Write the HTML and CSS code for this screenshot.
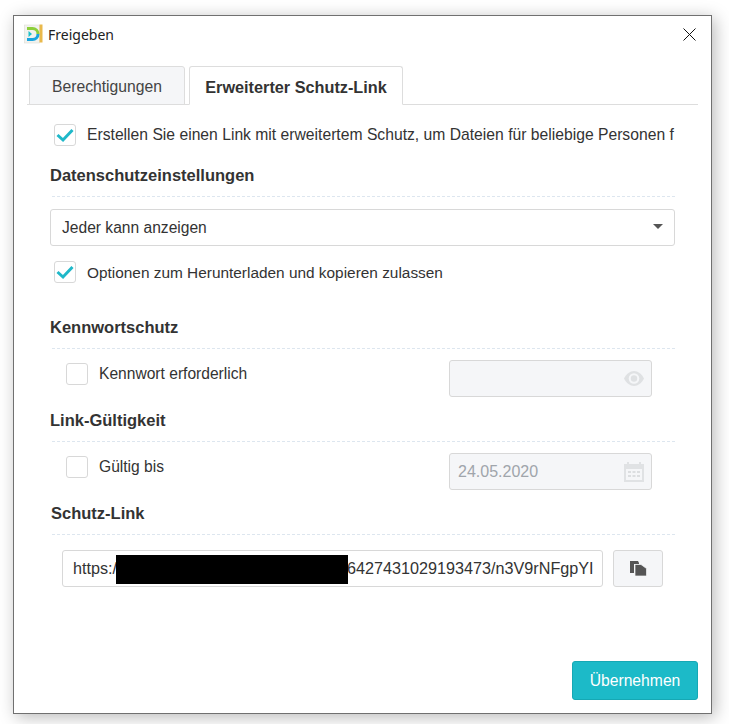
FILE: index.html
```html
<!DOCTYPE html>
<html lang="de">
<head>
    <meta charset="UTF-8">
    <title>Freigeben</title>
    <link rel="stylesheet" href="styles.css">
</head>
<body>
<div class="window">
    <div class="titlebar">
        <svg class="logo" width="20" height="20" viewBox="0 0 20 20">
            <rect x="0.500" y="1" width="15" height="18" fill="#f2f2ee" stroke="#dcdcd6" stroke-width="0.600"/>
            <rect x="15.500" y="0.500" width="3" height="18" fill="#e9b94c"/>
            <path d="M3 4.500h5.500a5.500 5.500 0 0 1 5.500 5.500" fill="none" stroke="#8ccf3a" stroke-width="3"/>
            <path d="M14 10a5.500 5.500 0 0 1-5.500 5.500H3" fill="none" stroke="#1aa5e0" stroke-width="3"/>
            <path d="M4.500 7l3.500 3-3.500 3z" fill="#1cc0c8"/>
        </svg>
        <span class="title">Freigeben</span>
        <svg class="close" width="13" height="13" viewBox="0 0 13 13">
            <path d="M0.500 0.500l12 12M12.500 0.500l-12 12" stroke="#111" stroke-width="1" fill="none"/>
        </svg>
    </div>

    <ul class="tabs">
        <li>Berechtigungen</li>
        <li class="selected">Erweiterter Schutz-Link</li>
    </ul>

    <div class="content">
        <label class="check-row first">
            <span class="checkbox"><svg width="20" height="20" viewBox="0 0 20 20"><path d="M2.500 10l5.500 5 9.500-10" fill="none" stroke="#1fb8c9" stroke-width="3"/></svg></span>
            <span class="check-text">Erstellen Sie einen Link mit erweitertem Schutz, um Dateien für beliebige Personen f</span>
        </label>

        <h3 class="heading top">Datenschutzeinstellungen</h3>
        <hr class="divider">
        <div class="select">
            <span>Jeder kann anzeigen</span>
            <i class="arrow"></i>
        </div>
        <label class="check-row second">
            <span class="checkbox"><svg width="20" height="20" viewBox="0 0 20 20"><path d="M2.500 10l5.500 5 9.500-10" fill="none" stroke="#1fb8c9" stroke-width="3"/></svg></span>
            <span class="check-text">Optionen zum Herunterladen und kopieren zulassen</span>
        </label>

        <h3 class="heading password">Kennwortschutz</h3>
        <hr class="divider">
        <div class="option-row">
            <span class="checkbox"></span>
            <span class="option-text">Kennwort erforderlich</span>
            <div class="field">
                <svg width="20" height="15" viewBox="0 0 20 15">
                    <path d="M0 7.500C2.500 2.800 6 0 10 0s7.500 2.800 10 7.500C17.500 12.200 14 15 10 15S2.500 12.200 0 7.500z" fill="#dfe1e3"/>
                    <circle cx="10" cy="7.500" r="5.300" fill="#f5f6f8"/>
                    <circle cx="10" cy="7.500" r="3.200" fill="#dfe1e3"/>
                </svg>
            </div>
        </div>

        <h3 class="heading">Link-Gültigkeit</h3>
        <hr class="divider">
        <div class="option-row">
            <span class="checkbox"></span>
            <span class="option-text">Gültig bis</span>
            <div class="field">
                <span class="date">24.05.2020</span>
                <svg width="20" height="20" viewBox="0 0 20 20">
                    <path d="M0 2h3V0h2v2h10V0h2v2h3v18H0z" fill="#e0e2e4"/>
                    <rect x="2" y="7" width="16" height="11" fill="#f5f6f8"/>
                    <path d="M4 9h3v2H4zM8.500 9h3v2h-3zM13 9h3v2h-3zM4 13h3v2H4zM8.500 13h3v2h-3zM13 13h3v2h-3z" fill="#dcdee0"/>
                </svg>
            </div>
        </div>

        <h3 class="heading link">Schutz-Link</h3>
        <hr class="divider">
        <div class="link-row">
            <div class="url">
                <span>https://</span><i class="redacted"></i><span>6427431029193473/n3V9rNFgpYI</span>
            </div>
            <button class="copy">
                <svg width="17" height="15" viewBox="0 0 17 15">
                    <path d="M0 0h8l1 2v1H4v9H0z" fill="#555"/>
                    <path d="M5 3.500h6l5.500 4V15H5z" fill="#555" stroke="#f5f6f8" stroke-width="0.700"/>
                </svg>
            </button>
        </div>
    </div>

    <div class="footer">
        <button class="apply">Übernehmen</button>
    </div>
</div>
</body>
</html>
```

FILE: styles.css
```css
*{
    margin: 0;
    padding: 0;
    box-sizing: border-box;
}
body{
    width: 729px;
    height: 724px;
    padding: 15px 17px 10px 13px;
    background: #fff;
    overflow: hidden;
    font-family: "Liberation Sans", Arial, sans-serif;
    font-size: 15.600px;
    color: #333;
}
.window{
    width: 699px;
    height: 699px;
    display: flex;
    flex-direction: column;
    background: #fff;
    border: 1px solid #707070;
    box-shadow: 3px 3px 16px rgba(0,0,0,.28);
}

.titlebar{
    height: 36px;
    display: flex;
    align-items: center;
    padding: 0 15px 0 10px;
}
.logo{
    margin-right: 4px;
}
.title{
    flex: 1;
    font-family: "Noto Sans", sans-serif;
    font-size: 14px;
    color: #222;
}

.tabs{
    display: flex;
    gap: 4px;
    height: 39px;
    margin: 14px 13px 0;
    padding-left: 2px;
    border-bottom: 1px solid #ddd;
    list-style: none;
}
.tabs li{
    width: 156px;
    height: 39px;
    text-align: center;
    line-height: 40px;
    font-size: 15.700px;
    white-space: nowrap;
    background: #f5f6f8;
    border: 1px solid #ddd;
    border-radius: 3px 3px 0 0;
    color: #444;
}
.tabs .selected{
    width: 214px;
    background: #fff;
    border-bottom-color: #fff;
    font-size: 16.250px;
    font-weight: bold;
    color: #333;
}

.content{
    padding: 0 36px;
}
.check-row{
    display: flex;
    align-items: center;
    height: 22px;
    padding-left: 4px;
}
.first{
    margin-top: 19px;
    font-size: 15.700px;
}
.second{
    margin-top: 15px;
    font-size: 15.400px;
}
.second .check-text{
    padding-top: 1px;
}
.checkbox{
    flex: none;
    width: 22px;
    height: 22px;
    display: block;
    background: #fff;
    border: 1px solid #d8d8d8;
    border-radius: 3px;
}
.checkbox svg{
    display: block;
}
.check-text{
    margin-left: 11px;
    white-space: nowrap;
}

.heading{
    height: 21px;
    margin-top: 13px;
    line-height: 21px;
    font-size: 16.500px;
    font-weight: bold;
    color: #333;
}
.top{
    margin-top: 19px;
}
.password{
    margin-top: 34px;
}
.link{
    padding-left: 1px;
}
.divider{
    height: 1px;
    margin: 10px 0 0 2px;
    border: 0;
    border-top: 1px dashed #dde6ef;
}

.select{
    height: 37px;
    margin-top: 12px;
    display: flex;
    align-items: center;
    justify-content: space-between;
    padding: 1px 11px 0;
    font-size: 15.600px;
    border: 1px solid #d8d8d8;
    border-radius: 3px;
    background: #fff;
}
.arrow{
    width: 0;
    height: 0;
    border-left: 5.500px solid transparent;
    border-right: 5.500px solid transparent;
    border-top: 5.500px solid #555;
    margin-top: -3px;
}

.option-row{
    height: 37px;
    margin-top: 11px;
    display: flex;
    padding: 3px 23px 0 16px;
}
.option-text{
    margin-left: 11px;
    line-height: 22px;
}
.field{
    width: 203px;
    height: 37px;
    margin: -3px 0 0 auto;
    display: flex;
    align-items: center;
    justify-content: flex-end;
    padding: 0 7px 0 8px;
    background: #f5f6f8;
    border: 1px solid #d8d8d8;
    border-radius: 3px;
}
.date{
    flex: 1;
    font-size: 16px;
    color: #a0a5ab;
}

.link-row{
    height: 37px;
    margin-top: 15px;
    display: flex;
    gap: 10px;
    padding-left: 12px;
}
.url{
    width: 541px;
    height: 37px;
    display: flex;
    align-items: center;
    padding-left: 10px;
    font-size: 16.200px;
    white-space: nowrap;
    overflow: hidden;
    background: #fff;
    border: 1px solid #d8d8d8;
    border-radius: 3px;
}
/* black bar over the hidden part of the address */
.redacted{
    position: relative;
    z-index: 1;
    flex: none;
    width: 232px;
    height: 29px;
    margin: 2px -1px 0 -5.600px;
    background: #000;
}
.copy{
    width: 50px;
    height: 37px;
    background: #f5f6f8;
    border: 1px solid #d8d8d8;
    border-radius: 3px;
    display: flex;
    align-items: center;
    justify-content: center;
}

.footer{
    margin-top: auto;
    padding: 0 13px 13px;
    display: flex;
    justify-content: flex-end;
}
.apply{
    width: 126px;
    height: 39px;
    font-family: inherit;
    font-size: 15.700px;
    color: #fff;
    background: #1cbac8;
    border: 1px solid #15a8b4;
    border-radius: 3px;
}
```
